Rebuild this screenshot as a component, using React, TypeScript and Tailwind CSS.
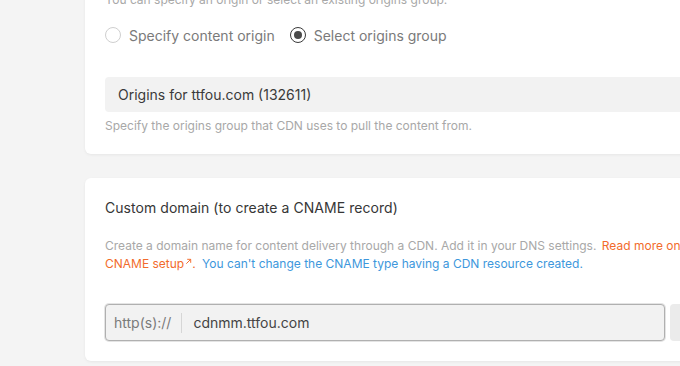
import React from "react";

function Radio({ checked, label }: { checked?: boolean; label: string }) {
  return (
    <label className="flex items-center gap-[8px] cursor-pointer">
      <span
        className={
          "w-[16px] h-[16px] rounded-full border flex items-center justify-center bg-white " +
          (checked ? "border-[#3a3a3a]" : "border-[#cfcfcf]")
        }
      >
        {checked && <span className="w-[8px] h-[8px] rounded-full bg-[#4a4a4a]" />}
      </span>
      <span className="text-[14px] text-[#7a7a7a]">{label}</span>
    </label>
  );
}

export default function App() {
  return (
    <div
      className="w-[680px] h-[366px] overflow-hidden bg-[#f4f4f4]"
      style={{ fontFamily: "Inter, 'Noto Sans', sans-serif" }}
    >
      <div className="pl-[85px] -mt-[29px]">
        {/* Origin card */}
        <div className="w-[640px] bg-white rounded-[6px] shadow-[0_1px_3px_rgba(0,0,0,0.06)] px-[20px] pt-[20px] pb-[19px]">
          <p className="text-[12px] leading-[18px] text-[#a8a8a8]">
            You can specify an origin or select an existing origins group.
          </p>
          <div className="flex items-center gap-[15px] mt-[16px] h-[20px]">
            <Radio label="Specify content origin" />
            <Radio checked label="Select origins group" />
          </div>
          <div className="mt-[32px] h-[35px] bg-[#f2f2f2] rounded-[4px] flex items-center px-[13px] text-[14px] text-[#3a3a3a]">
            Origins for ttfou.com (132611)
          </div>
          <p className="mt-[5px] text-[12px] leading-[18px] text-[#a8a8a8]">
            Specify the origins group that CDN uses to pull the content from.
          </p>
        </div>

        {/* Custom domain card */}
        <div className="mt-[24px] w-[640px] bg-white rounded-[6px] shadow-[0_1px_3px_rgba(0,0,0,0.06)] px-[20px] pt-[20px] pb-[20px]">
          <h3 className="text-[14px] leading-[20px] text-[#363636] tracking-[0.05px]">
            Custom domain (to create a CNAME record)
          </h3>
          <p className="mt-[19px] text-[12px] leading-[18px] text-[#a8a8a8]">
            Create a domain name for content delivery through a CDN. Add it in your DNS settings.{" "}
            <span className="ml-[2px] text-[#f26b2c]">
              Read more on CNAME setup
              <svg viewBox="0 0 8 8" className="inline-block w-[7px] h-[7px] ml-[1px] -mt-[6px]" fill="none" stroke="#f26b2c" strokeWidth="1.1">
                <path d="M1.5 6.5 L6.5 1.5 M2.5 1.5 H6.5 V5.5" />
              </svg>
              .
            </span>{" "}
            <span className="ml-[3px] text-[#3d97dc]">You can&apos;t change the CNAME type having a CDN resource created.</span>
          </p>
          <div className="mt-[31px] flex gap-[5px]">
            <div className="w-[560px] h-[37px] shrink-0 bg-[#f2f2f2] border border-[#b0b0b0] rounded-[4px] shadow-[0_0_0_1px_#e4e4e4] flex items-center">
              <span className="pl-[8px] pr-[10px] text-[14px] text-[#7a7a7a]">http(s)://</span>
              <span className="w-px h-[20px] bg-[#d6d6d6]" />
              <span className="pl-[11px] text-[14px] text-[#444]">cdnmm.ttfou.com</span>
            </div>
            <div className="flex-1 h-[37px] bg-[#ebebeb] rounded-[4px]" />
          </div>
        </div>
      </div>
    </div>
  );
}
